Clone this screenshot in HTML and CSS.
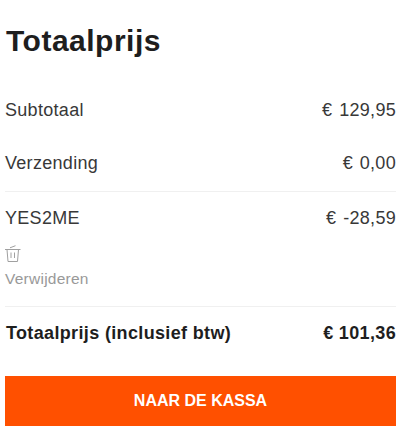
FILE: index.html
```html
<!DOCTYPE html>
<html lang="nl">
<head>
<meta charset="utf-8">
<title>Totaalprijs</title>
<link rel="stylesheet" href="styles.css">
</head>
<body>
<main class="summary">
  <h1 class="title">Totaalprijs</h1>
  <div class="row row-sub"><span>Subtotaal</span><span class="amount">€ 129,95</span></div>
  <div class="row row-ship"><span>Verzending</span><span class="amount">€ 0,00</span></div>
  <div class="coupon">
    <div class="row"><span>YES2ME</span><span class="amount">€ -28,59</span></div>
    <svg class="trash" viewBox="0 0 16 17" width="16" height="17" fill="none" stroke="#a0a0a0" stroke-width="1">
      <path d="M0 4.5h15.5M2 4.5l1 12h9.5l1-12M5 2.8 10.5.7M6 7.5v5.5M9.5 7.5v5.5"/>
    </svg>
    <div class="remove">Verwijderen</div>
  </div>
  <div class="row total"><span>Totaalprijs (inclusief btw)</span><span>€ 101,36</span></div>
  <button class="checkout">NAAR DE KASSA</button>
</main>
</body>
</html>
```
FILE: styles.css
```css
* { box-sizing: border-box; }
html, body { margin: 0; background: #fff; }
body { font-family: "Liberation Sans", Arial, sans-serif; color: #383838; }
.summary { width: 391px; margin-left: 5px; padding-top: 24px; }
.title { margin: 0 0 0 1px; font-size: 30px; line-height: 34px; font-weight: 700; color: #1e1e1e; letter-spacing: 0.5px; }
.row { display: flex; justify-content: space-between; font-size: 18px; line-height: 20px; letter-spacing: 0.3px; }
.amount { word-spacing: 1.5px; }
.row-sub { margin-top: 42px; }
.row-ship { margin-top: 33px; padding-bottom: 18px; border-bottom: 1px solid #f0f0f0; }
.coupon { padding-top: 16px; padding-bottom: 19px; border-bottom: 1px solid #f0f0f0; }
.trash { display: block; margin-top: 17px; }
.remove { margin-top: 8px; font-size: 15.5px; line-height: 17px; color: #999; letter-spacing: 0.25px; }
.total { margin-top: 16px; padding-left: 1px; font-weight: 700; letter-spacing: 0.35px; color: #1e1e1e; }
.checkout { display: block; width: 100%; height: 50px; margin-top: 33px; border: 0; background: #ff5000; color: #fff; font: 700 16px "Liberation Sans", Arial, sans-serif; }
```
